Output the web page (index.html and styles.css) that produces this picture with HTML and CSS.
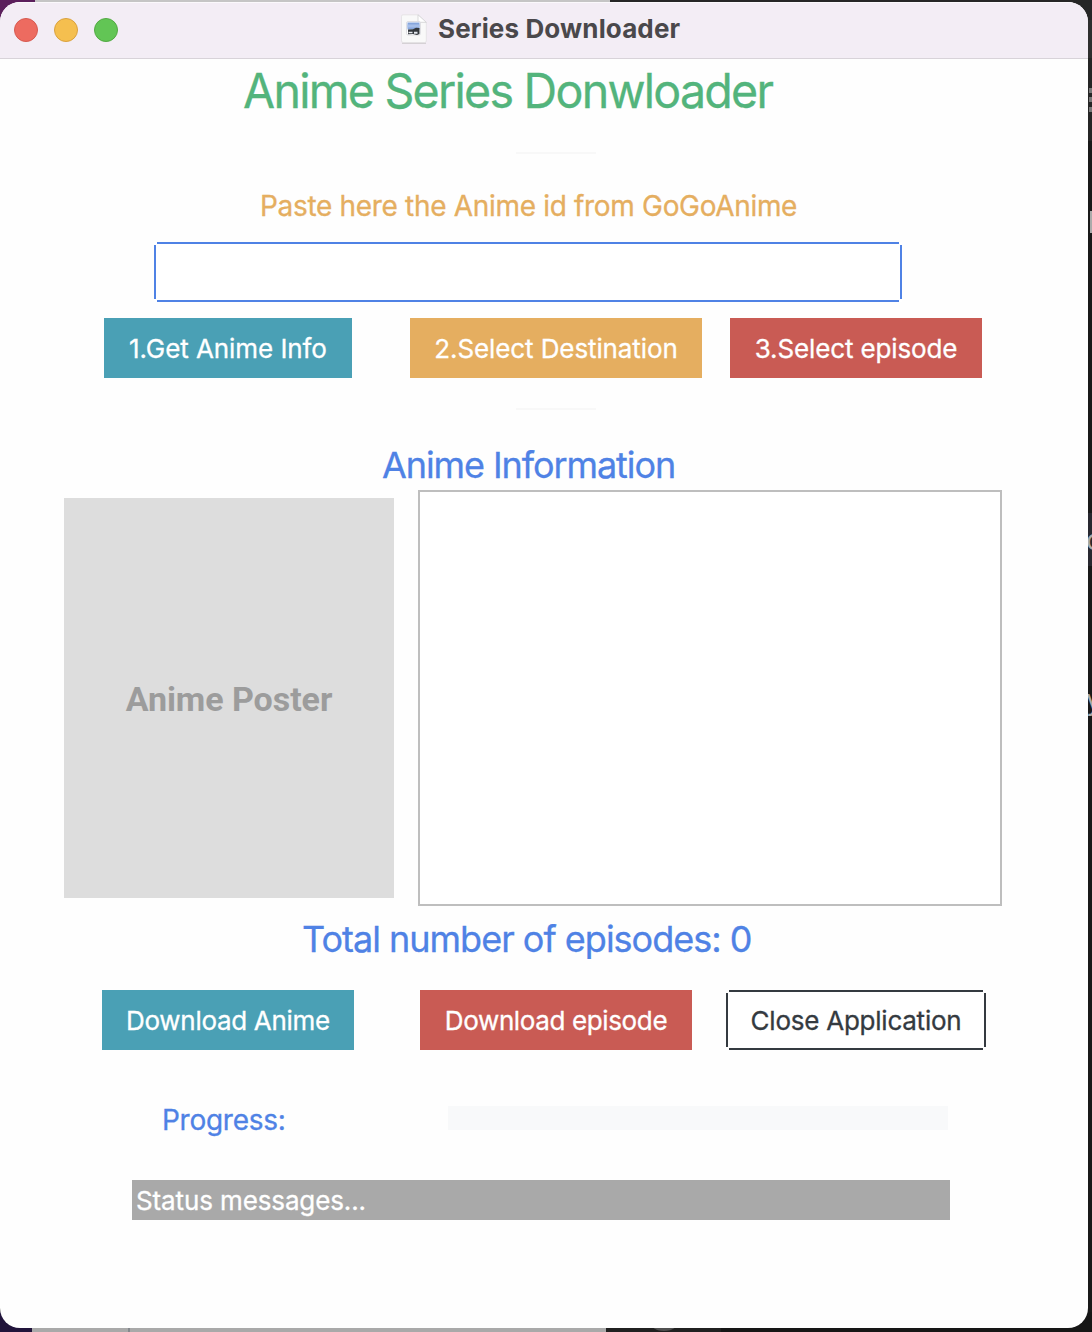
FILE: index.html
```
<!DOCTYPE html>
<html lang="en">
<head>
<meta charset="utf-8">
<title>Series Downloader</title>
<link rel="stylesheet" href="styles.css">
</head>
<body>
<div class="desktop">
  <div class="behind">
    <i class="menu-line line-a"></i><i class="menu-line line-b"></i><i class="menu-line line-c"></i>
    <i class="caret"></i><i class="row-highlight"></i>
    <span class="glyph glyph-o">o</span><span class="glyph glyph-y">y</span>
    <i class="divider"></i><i class="knob"></i>
  </div>
  <main class="window">
    <header class="titlebar">
      <div class="lights"><i class="light red"></i><i class="light yellow"></i><i class="light green"></i></div>
      <svg class="doc-icon" width="28" height="30" viewBox="0 0 28 30">
        <path d="M2 29.200h24" stroke="#cbc7ca" stroke-width="1.200"/>
        <path d="M3 .8H18l8.300 7.500V27a1.500 1.500 0 0 1-1.500 1.500H3A1.500 1.500 0 0 1 1.500 27V2.300A1.500 1.500 0 0 1 3 .8z" fill="#f9f9f9" stroke="#e2dfe2" stroke-width=".8"/>
        <path d="M18 .8V7q0 1.300 1.300 1.300h7z" fill="#fff" stroke="#d1d0d2" stroke-width=".8"/>
        <rect x="6.500" y="7.500" width="14" height="13.500" rx="1.500" fill="#fff" stroke="#d7d7dc" stroke-width=".8"/>
        <rect x="7.500" y="8.500" width="12" height="7" fill="#86a6dd"/>
        <path d="M7.500 10.500h12v3h-12z" fill="#a5bee9"/>
        <path d="M8 15.500l5-.3 3-1.500 3.500.3v6l-2.500 1-4-1-5 .3z" fill="#34383d"/>
        <path d="M8.500 17.800h4v1.400h-4zM14 17.800h3.500v2H14z" fill="#e5e8ee"/>
      </svg>
      <span class="window-title">Series Downloader</span>
    </header>
    <h1 class="heading">Anime Series Donwloader</h1>
    <hr class="separator">
    <label class="prompt" for="anime-id">Paste here the Anime id from GoGoAnime</label>
    <input class="outline id-field" id="anime-id" type="text">
    <div class="buttons steps">
      <button class="btn info">1.Get Anime Info</button>
      <button class="btn warning">2.Select Destination</button>
      <button class="btn danger">3.Select episode</button>
    </div>
    <hr class="separator second">
    <h2 class="subheading">Anime Information</h2>
    <div class="details">
      <div class="poster"><span class="poster-text">Anime Poster</span></div>
      <div class="description"></div>
    </div>
    <p class="total">Total number of episodes: 0</p>
    <div class="buttons actions">
      <button class="btn info">Download Anime</button>
      <button class="btn danger">Download episode</button>
      <button class="btn outline close">Close Application</button>
    </div>
    <div class="progress"><span class="progress-label">Progress:</span><div class="bar"></div></div>
    <div class="status"><span class="status-text">Status messages...</span></div>
  </main>
</div>
</body>
</html>
```
FILE: styles.css
```
* { box-sizing: border-box; }
body { margin: 0; font-family: Inter, "Liberation Sans", sans-serif; }
h1, h2, p { margin: 0; font-weight: 400; }
.desktop {
  position: relative; width: 1092px; height: 1332px; padding-top: 2px; overflow: hidden;
  background:
    linear-gradient(90deg, #5b1f5c 35px, #c5c5c5 35px, #c5c5c5 610px, #262626 610px) 0 0 / 100% 20px no-repeat,
    linear-gradient(90deg, #21143b 32px, #a9a9a9 32px, #a9a9a9 606px, #202020 606px, #202020 721px, #161616 721px) 0 100% / 100% 20px no-repeat,
    linear-gradient(#2e2e2e 58px, #252525 58px, #252525 141px, #191919 141px);
}
.behind { position: absolute; inset: 0; }
.behind i, .glyph { position: absolute; }
.menu-line { left: 1089px; width: 3px; height: 5px; background: #777; }
.line-a { top: 88px; }
.line-b { top: 97px; }
.line-c { top: 107px; }
.caret { left: 1090px; top: 211px; width: 2px; height: 22px; background: #aaa; }
.row-highlight { left: 1088px; top: 513px; width: 4px; height: 53px; background: #282830; }
.glyph { color: #aaa; font-size: 28px; line-height: 32px; }
.glyph-o { left: 1086px; top: 524px; }
.glyph-y { left: 1086px; top: 684px; }
.divider { left: 128px; top: 1328px; width: 2px; height: 4px; background: #85898e; }
.knob { left: 648px; top: 1307px; width: 32px; height: 24px; border-radius: 50%; background: #505050; }
.window {
  position: relative; display: flex; flex-direction: column; align-items: flex-start;
  width: 1088px; height: 1326px; border-radius: 20px; background: #fefefe; overflow: hidden;
  white-space: nowrap; -webkit-text-stroke: .3px;
}
.titlebar {
  display: flex; align-items: center; width: 100%; height: 57px; flex: none;
  background: #f3edf5; border-bottom: 1px solid #d8d3d9; box-shadow: inset 0 1px #fbf9fc;
}
.lights { display: flex; gap: 16px; width: 400px; padding-left: 14px; }
.light { width: 24px; height: 24px; border-radius: 50%; border: 1px solid; }
.red { background: #ed6b60; border-color: #d65a50; }
.yellow { background: #f5bf4f; border-color: #d9a13f; }
.green { background: #62c555; border-color: #52a943; }
.doc-icon { flex: none; margin-top: -2px; }
.window-title { margin: -2px 0 0 10px; font-size: 26px; font-weight: 700; line-height: 40px; letter-spacing: .13px; color: #4a484b; -webkit-text-stroke: 0; }
.heading { margin-left: 243px; font-size: 48px; line-height: 63px; color: #53b47c; letter-spacing: -1.8px; transform: scaleX(.97); transform-origin: 0 50%; }
.separator { width: 80px; height: 2px; margin: 30px 0 0 516px; border: 0; background: #f8f8f8; flex: none; }
.prompt { margin: 32px 0 0 260px; font-size: 28px; line-height: 40px; letter-spacing: -.32px; color: #e5ae60; }
.outline {
  --line: #4f82e5; border: 0; border-radius: 0; outline: 0; background:
    linear-gradient(var(--line), var(--line)) 50% 0 / calc(100% - 6px) 2px no-repeat,
    linear-gradient(var(--line), var(--line)) 50% 100% / calc(100% - 6px) 2px no-repeat,
    linear-gradient(var(--line), var(--line)) 0 50% / 2px calc(100% - 6px) no-repeat,
    linear-gradient(var(--line), var(--line)) 100% 50% / 2px calc(100% - 6px) no-repeat, #fff;
}
.id-field { width: 748px; height: 60px; margin: 16px 0 0 154px; padding: 0 12px; font: 26px Inter, sans-serif; flex: none; }
.buttons { display: flex; height: 60px; flex: none; }
.steps { margin: 16px 0 0 104px; }
.steps .info { width: 248px; margin-right: 58px; letter-spacing: -.07px; }
.steps .warning { width: 292px; margin-right: 28px; letter-spacing: -.1px; }
.steps .danger { width: 252px; letter-spacing: -.13px; }
.btn { height: 60px; border: 0; padding: 2px 0 0; font: 26px/58px Inter, "Liberation Sans", sans-serif; color: #fff; white-space: nowrap; }
.info { background-color: #4aa0b5; }
.warning { background-color: #e5ae60; }
.danger { background-color: #c95b54; }
.second { margin-top: 30px; }
.subheading { margin: 31px 0 1px 382px; font-size: 36px; line-height: 48px; letter-spacing: -1.08px; color: #4f82e5; }
.details { display: flex; gap: 24px; height: 416px; margin-left: 64px; flex: none; }
.poster { display: flex; align-items: center; justify-content: center; width: 330px; height: 400px; margin-top: 8px; padding-top: 2px; background: #ddd; }
.poster-text { font: 700 34px/40px Roboto, sans-serif; letter-spacing: -.05px; color: #9c9c9c; -webkit-text-stroke: 0; }
.description { width: 584px; border: 2px solid #bebebe; background: #fff; }
.total { margin-left: 302px; font-size: 36px; line-height: 66px; letter-spacing: -1px; color: #4f82e5; }
.actions { margin: 18px 0 0 102px; }
.actions .info { width: 252px; margin-right: 66px; letter-spacing: -.3px; }
.actions .danger { width: 272px; margin-right: 34px; letter-spacing: -.37px; }
.actions .close { --line: #343a40; width: 260px; color: #343a40; letter-spacing: -.24px; }
.progress { display: flex; align-items: center; height: 24px; margin: 56px 0 0 162px; flex: none; }
.progress-label { width: 286px; padding-top: 4px; font-size: 28px; line-height: 40px; letter-spacing: -.27px; color: #4f82e5; }
.bar { width: 500px; height: 24px; background: #f8f9fa; }
.status { width: 818px; height: 40px; margin: 50px 0 0 132px; padding-left: 4px; background: #a9a9a9; color: #fff; font-size: 26px; line-height: 42px; letter-spacing: -.12px; }
```
